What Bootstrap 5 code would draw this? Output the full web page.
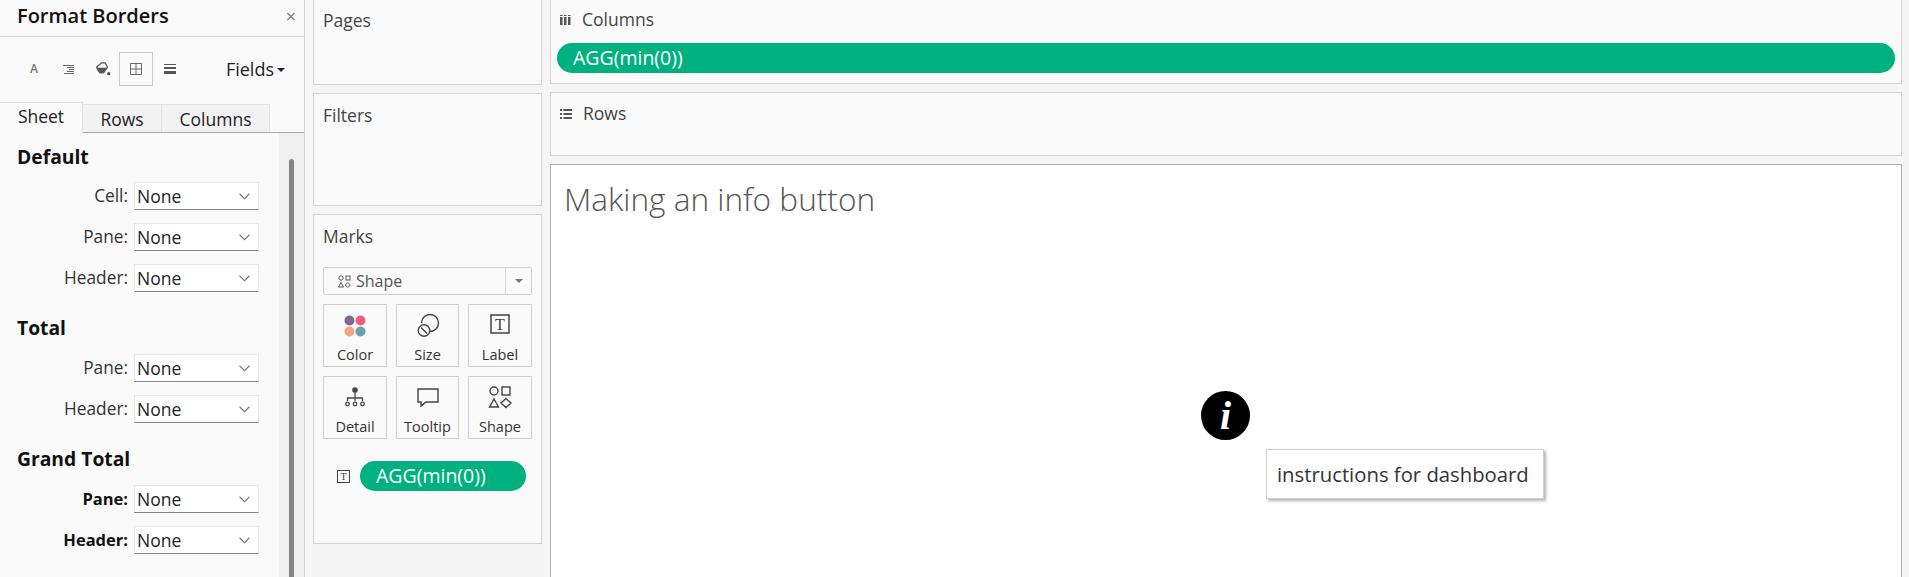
<!DOCTYPE html>
<html lang="en">

<head>
  <meta charset="UTF-8" />
  <meta name="viewport" content="width=device-width, initial-scale=1" />
  <title>Making an info button</title>
  <link href="https://cdn.jsdelivr.net/npm/bootstrap@5.3.0/dist/css/bootstrap.min.css" rel="stylesheet">
  <style>
    html, body {
      height: 577px;
      overflow: hidden;
    }

    body {
      font-family: "Open Sans", "Liberation Sans", sans-serif;
      font-size: 17.5px;
      background-color: #f5f5f5;
      color: #222;
    }

    .app-shell {
      height: 577px;
      width: 1909px;
    }

    /* format pane */
    .format-pane {
      width: 305px;
      background-color: #fafafa;
      border-right: 1px solid #d4d4d4;
      flex: none;
    }

    .pane-head {
      height: 37px;
      border-bottom: 1px solid #d4d4d4;
      padding: 0 8px 4px 17px;
    }

    .pane-head h1 {
      font-size: 20px;
      font-weight: 600;
      margin: 0;
      color: #111;
    }

    .close-x {
      color: #777;
      font-size: 18px;
      line-height: 1;
    }

    .pane-tools {
      height: 65px;
      padding: 0 19px 1px 17px;
    }

    .tool-box {
      width: 34px;
      height: 34px;
      border: 1px solid transparent;
    }

    .tool-box.is-on {
      border-color: #c8c8c8;
    }

    .tool-a {
      font-size: 12px;
      font-weight: 600;
      color: #777;
    }

    .fields-btn {
      font-size: 18px;
      color: #222;
      margin-left: auto;
    }

    .caret-down {
      border-top: 4px solid #222;
      border-left: 4px solid transparent;
      border-right: 4px solid transparent;
      margin-left: 3px;
      margin-top: 2px;
    }

    .pane-tabs {
      height: 31px;
      flex: none;
      border-bottom: 1px solid #a8a8a8;
      align-items: flex-end;
      --bs-nav-tabs-border-width: 0;
      --bs-nav-link-padding-x: 0;
      --bs-nav-link-padding-y: 0;
    }

    .pane-tabs .nav-link {
      height: 28px;
      margin-bottom: 0;
      border: 1px solid #e2e2e2;
      border-bottom: 0;
      border-left: 0;
      border-radius: 0;
      background-color: #f2f2f2;
      color: #222;
      font-size: 17.5px;
      line-height: 28px;
      text-align: center;
    }

    .pane-tabs .nav-link.active {
      height: 31px;
      margin-bottom: -1px;
      background-color: #fafafa;
      color: #222;
      line-height: 26px;
    }

    .tab-sheet { width: 83px; }
    .tab-rows { width: 79px; }
    .tab-columns { width: 108px; }

    .pane-body {
      height: 444px;
    }

    .pane-scroll {
      width: 279px;
      padding: 12px 0 0 17px;
      flex: none;
    }

    .pane-gutter {
      background-color: #f0f0f0;
      padding-left: 10px;
      padding-top: 26px;
    }

    .pane-thumb {
      width: 5px;
      height: 100%;
      background-color: #858585;
      border-radius: 3px 3px 0 0;
    }

    .group-title {
      font-size: 19.3px;
      font-weight: 700;
      line-height: 24px;
      margin: 24px 0 14px;
      color: #111;
    }

    .group-title.is-first {
      margin-top: 0;
      margin-bottom: 13px;
    }

    .field-row {
      gap: 6px;
      margin-bottom: 13px;
    }

    .field-row label {
      width: 111px;
      text-align: right;
      color: #333;
      margin: 0;
      font-size: 17.3px;
    }

    .field-row.is-bold label {
      font-weight: 700;
      font-size: 16.5px;
      color: #111;
    }

    .field-row .form-select {
      width: 125px;
      height: 28px;
      padding: 0 0 0 2px;
      font-size: 17.5px;
      color: #222;
      border: 1px solid #e8e8e8;
      border-bottom-color: #858585;
      border-radius: 0;
      line-height: 26px;
      background-image: url("data:image/svg+xml,%3csvg xmlns='http://www.w3.org/2000/svg' viewBox='0 0 10 6'%3e%3cpath fill='none' stroke='%23777' d='M.5.500 5 5l4.500-4.500'/%3e%3c/svg%3e");
      background-position: right 8px center;
      background-size: 11px 7px;
      font-family: inherit;
    }

    /* shelves and cards */
    .cards-col {
      width: 229px;
      margin-left: 8px;
      margin-right: 8px;
      flex: none;
      gap: 8px;
    }

    .main-col {
      width: 1352px;
      gap: 8px;
      flex: none;
    }

    .shelf-card {
      background-color: #fafafa;
      border: 1px solid #d4d4d4;
      color: #444;
      flex: none;
    }

    .card-pages {
      height: 85px;
      border-top: 0;
      padding: 7px 9px;
    }

    .card-filters {
      height: 113px;
      padding: 8px 9px;
    }

    .card-marks {
      height: 330px;
      padding: 7px 9px;
    }

    .marks-title {
      height: 28px;
      margin-bottom: 17px;
    }

    .mark-type {
      height: 28px;
      border: 1px solid #d0d0d0;
      border-radius: 2px;
      background-color: #fafafa;
      color: #555;
      margin-bottom: 9px;
      font-size: 16px;
    }

    .mark-type-name {
      gap: 5px;
      padding-left: 14px;
    }

    .mark-type-arrow {
      width: 26px;
      border-left: 1px solid #d8d8d8;
    }

    .mark-type-arrow i {
      display: block;
      border-top: 4px solid #777;
      border-left: 4px solid transparent;
      border-right: 4px solid transparent;
    }

    .mark-grid {
      display: grid;
      grid-template-columns: 64px 63px 64px;
      grid-auto-rows: 63px;
      column-gap: 9px;
      row-gap: 9px;
    }

    .mark-btn {
      border: 1px solid #d0d0d0;
      font-size: 14.5px;
      color: #333;
      padding-top: 9px;
      gap: 6px;
    }

    .mark-btn svg {
      height: 24px;
      flex: none;
    }

    .marks-field {
      margin-top: 22px;
      gap: 10px;
      padding-left: 14px;
    }

    .green-pill {
      background-color: #00b180;
      color: #fff;
      height: 30px;
      border-radius: 15px;
      font-size: 19.5px;
      line-height: 30px;
      padding-left: 16px;
    }

    .marks-field .green-pill {
      width: 166px;
    }

    .card-columns {
      height: 84px;
      border-top: 0;
      padding: 0 6px 0 6px;
    }

    .card-rows {
      height: 64px;
      padding: 0 9px;
    }

    .shelf-name {
      gap: 11px;
      height: 43px;
      padding-left: 3px;
      padding-bottom: 4px;
    }

    .card-rows .shelf-name {
      height: 41px;
      padding-left: 0;
      padding-bottom: 0;
    }

    .viz-canvas {
      position: relative;
      height: 430px;
      flex: none;
      background-color: #fff;
      border: 1px solid #b0b0b0;
    }

    .viz-title {
      font-size: 31.6px;
      font-weight: 300;
      color: #555;
      margin: 0;
      padding: 14px 0 0 13px;
      line-height: 40px;
    }

    /* these two float free on the dashboard */
    .info-dot {
      position: absolute;
      left: 650px;
      top: 226px;
      width: 49px;
      height: 49px;
      border-radius: 50%;
      background-color: #000;
      color: #fff;
      font-family: "Liberation Serif", serif;
      font-style: italic;
      font-weight: 700;
      font-size: 40px;
      line-height: 49px;
      text-align: center;
    }

    .info-tip {
      position: absolute;
      left: 715px;
      top: 284px;
      width: 278px;
      height: 50px;
      background-color: #fff;
      border: 1px solid #d0d0d0;
      box-shadow: 2px 2px 3px rgb(0 0 0 / 0.3);
      font-size: 20.3px;
      font-weight: 500;
      color: #333;
      line-height: 48px;
      padding-left: 10px;
      white-space: nowrap;
    }
  </style>
</head>

<body>
  <div class="app-shell d-flex">
    <aside class="format-pane d-flex flex-column">
      <div class="pane-head d-flex align-items-center justify-content-between">
        <h1>Format Borders</h1>
        <span class="close-x">×</span>
      </div>
      <div class="pane-tools d-flex align-items-center">
        <span class="tool-box d-flex align-items-center justify-content-center tool-a">A</span>
        <span class="tool-box d-flex align-items-center justify-content-center">
          <svg width="11" height="9" viewBox="0 0 11 9" fill="none" stroke="#666" stroke-width="1">
            <path d="M0 .5h11M4 2.500h7M6 4.500h5M4 6.500h7M1 8.500h10" />
          </svg>
        </span>
        <span class="tool-box d-flex align-items-center justify-content-center">
          <svg width="17" height="15" viewBox="0 0 20 18">
            <path d="M3 6 9 1h4l3 5-5 7H7z" fill="#fff" stroke="#555" stroke-width="1.500" />
            <path d="M2 7h14l-4 6H6z" fill="#555" />
            <circle cx="17.500" cy="14" r="2" fill="#555" />
          </svg>
        </span>
        <span class="tool-box is-on d-flex align-items-center justify-content-center">
          <svg width="12" height="12" viewBox="0 0 12 12" fill="none" stroke="#666" stroke-width="1">
            <path d="M.5.500h11v11H.5zM6 .5v11M.5 6h11" />
          </svg>
        </span>
        <span class="tool-box d-flex align-items-center justify-content-center">
          <svg width="12" height="10" viewBox="0 0 12 10" fill="#555">
            <rect width="12" height="1" />
            <rect y="3" width="12" height="2" />
            <rect y="7" width="12" height="3" />
          </svg>
        </span>
        <span class="fields-btn d-flex align-items-center">Fields<i class="caret-down"></i></span>
      </div>

      <ul class="nav nav-tabs pane-tabs">
        <li class="nav-item"><a class="nav-link active tab-sheet" href="#">Sheet</a></li>
        <li class="nav-item"><a class="nav-link tab-rows" href="#">Rows</a></li>
        <li class="nav-item"><a class="nav-link tab-columns" href="#">Columns</a></li>
      </ul>

      <div class="pane-body d-flex">
        <div class="pane-scroll">
          <div class="group-title is-first">Default</div>
          <div class="field-row d-flex align-items-center"><label>Cell:</label><select class="form-select"><option>None</option></select></div>
          <div class="field-row d-flex align-items-center"><label>Pane:</label><select class="form-select"><option>None</option></select></div>
          <div class="field-row d-flex align-items-center"><label>Header:</label><select class="form-select"><option>None</option></select></div>

          <div class="group-title">Total</div>
          <div class="field-row d-flex align-items-center"><label>Pane:</label><select class="form-select"><option>None</option></select></div>
          <div class="field-row d-flex align-items-center"><label>Header:</label><select class="form-select"><option>None</option></select></div>

          <div class="group-title">Grand Total</div>
          <div class="field-row is-bold d-flex align-items-center"><label>Pane:</label><select class="form-select"><option>None</option></select></div>
          <div class="field-row is-bold d-flex align-items-center"><label>Header:</label><select class="form-select"><option>None</option></select></div>
        </div>
        <div class="pane-gutter flex-grow-1">
          <div class="pane-thumb"></div>
        </div>
      </div>
    </aside>

    <div class="cards-col d-flex flex-column">
      <section class="shelf-card card-pages">Pages</section>
      <section class="shelf-card card-filters">Filters</section>
      <section class="shelf-card card-marks">
        <div class="marks-title d-flex align-items-center">Marks</div>
        <div class="mark-type d-flex align-items-stretch">
          <div class="mark-type-name d-flex align-items-center flex-grow-1">
            <svg width="13" height="13" viewBox="0 0 13 13" fill="none" stroke="#555" stroke-width="1">
              <circle cx="3" cy="3" r="2.200" />
              <rect x="8" y="1" width="4" height="4" />
              <path d="M3 7.500 5.500 12H.5zM9.800 7.500l2.500 2.500-2.500 2.500L7.300 10z" />
            </svg>
            Shape
          </div>
          <div class="mark-type-arrow d-flex align-items-center justify-content-center"><i></i></div>
        </div>
        <div class="mark-grid">
          <div class="mark-btn d-flex flex-column align-items-center">
            <svg width="24" height="24" viewBox="0 0 24 24">
              <circle cx="6.500" cy="6.500" r="5" fill="#84688f" />
              <circle cx="17.500" cy="6.500" r="5" fill="#f0607a" />
              <circle cx="6.500" cy="17.500" r="5" fill="#f2a77c" />
              <circle cx="17.500" cy="17.500" r="5" fill="#6a9fae" />
            </svg>
            Color
          </div>
          <div class="mark-btn d-flex flex-column align-items-center">
            <svg width="24" height="24" viewBox="0 0 24 24" fill="none" stroke="#444" stroke-width="1.400">
              <path d="M5.500 9A8.500 8.500 0 1 1 14 17.500" />
              <circle cx="8" cy="16.500" r="5.800" />
              <path d="m5 13.500 6 6" />
            </svg>
            Size
          </div>
          <div class="mark-btn d-flex flex-column align-items-center">
            <svg width="24" height="24" viewBox="0 0 24 24">
              <rect x="3" y="1" width="18" height="18" fill="none" stroke="#444" stroke-width="1.500" />
              <text x="12" y="16" text-anchor="middle" font-family="Liberation Serif, serif" font-size="16" fill="#444">T</text>
            </svg>
            Label
          </div>
          <div class="mark-btn d-flex flex-column align-items-center">
            <svg width="24" height="24" viewBox="0 0 24 24" fill="none" stroke="#444" stroke-width="1.300">
              <circle cx="12" cy="4" r="2.800" fill="#444" stroke="none" />
              <path d="M12 6v8M4.500 15v-3h15v3M12 12v3" />
              <circle cx="4.500" cy="18" r="1.800" />
              <circle cx="12" cy="18" r="1.800" />
              <circle cx="19.500" cy="18" r="1.800" />
            </svg>
            Detail
          </div>
          <div class="mark-btn d-flex flex-column align-items-center">
            <svg width="24" height="24" viewBox="0 0 24 24" fill="none" stroke="#444" stroke-width="1.400">
              <path d="M2 3h20v13H10l-5 4v-4H2z" />
            </svg>
            Tooltip
          </div>
          <div class="mark-btn d-flex flex-column align-items-center">
            <svg width="24" height="24" viewBox="0 0 24 24" fill="none" stroke="#444" stroke-width="1.400">
              <circle cx="6" cy="5" r="4" />
              <rect x="14" y="1" width="8" height="8" />
              <path d="M6 13 10.500 21h-9zM18 12.500l5 4.500-5 4.500-5-4.500z" />
            </svg>
            Shape
          </div>
        </div>
        <div class="marks-field d-flex align-items-center">
          <svg width="13" height="13" viewBox="0 0 13 13">
            <rect x=".5" y=".5" width="12" height="12" fill="none" stroke="#444" />
            <text x="6.500" y="10" text-anchor="middle" font-family="Liberation Serif, serif" font-size="10" fill="#444">T</text>
          </svg>
          <div class="green-pill">AGG(min(0))</div>
        </div>
      </section>
    </div>

    <div class="main-col d-flex flex-column">
      <section class="shelf-card card-columns">
        <div class="shelf-name d-flex align-items-center">
          <svg width="11" height="10" viewBox="0 0 11 10" fill="#555">
            <rect y="2" width="2.500" height="8" />
            <rect x="4" y="2" width="2.500" height="8" />
            <rect x="8" y="2" width="2.500" height="8" />
            <rect y="0" width="2.500" height="1" />
            <rect x="4" y="0" width="2.500" height="1" />
            <rect x="8" y="0" width="2.500" height="1" />
          </svg>
          Columns
        </div>
        <div class="green-pill">AGG(min(0))</div>
      </section>
      <section class="shelf-card card-rows">
        <div class="shelf-name d-flex align-items-center">
          <svg width="12" height="10" viewBox="0 0 12 10" fill="#555">
            <rect width="2" height="2" />
            <rect x="3.500" width="8.500" height="2" />
            <rect y="4" width="2" height="2" />
            <rect x="3.500" y="4" width="8.500" height="2" />
            <rect y="8" width="2" height="2" />
            <rect x="3.500" y="8" width="8.500" height="2" />
          </svg>
          Rows
        </div>
      </section>
      <section class="viz-canvas">
        <h2 class="viz-title">Making an info button</h2>
        <div class="info-dot">i</div>
        <div class="info-tip">instructions for dashboard</div>
      </section>
    </div>
  </div>

  <script src="https://cdn.jsdelivr.net/npm/bootstrap@5.3.0/dist/js/bootstrap.bundle.min.js"></script>
</body>

</html>
